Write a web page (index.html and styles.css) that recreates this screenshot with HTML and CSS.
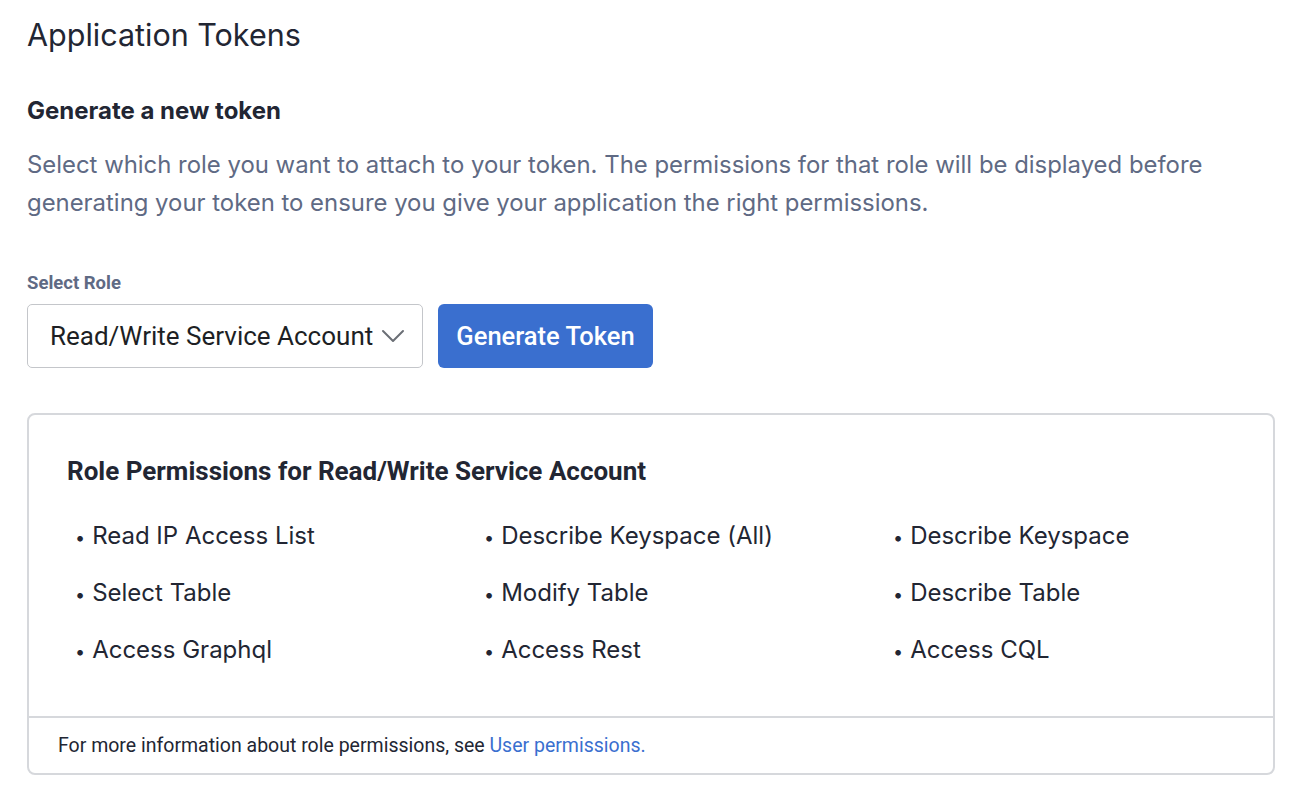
FILE: index.html
```html
<!DOCTYPE html>
<html lang="en">
<head>
<meta charset="utf-8">
<title>Application Tokens</title>
<link rel="stylesheet" href="styles.css">
</head>
<body>
<main class="page">
  <h1 class="page-title">Application Tokens</h1>
  <h2 class="section-title">Generate a new token</h2>
  <p class="desc">Select which role you want to attach to your token. The permissions for that role will be displayed before generating your token to ensure you give your application the right permissions.</p>

  <div class="field">
    <label class="field-label">Select Role</label>
    <div class="controls">
      <div class="select">
        <span class="select-value">Read/Write Service Account</span>
        <svg class="chevron" width="24" height="14" viewBox="0 0 24 14"><path d="M2 2 L12 12 L22 2" fill="none" stroke="#6b6f76" stroke-width="2" stroke-linecap="round" stroke-linejoin="round"/></svg>
      </div>
      <button class="btn-primary">Generate Token</button>
    </div>
  </div>

  <section class="card">
    <div class="card-body">
      <h3 class="card-title">Role Permissions for Read/Write Service Account</h3>
      <ul class="perm-grid">
        <li>Read IP Access List</li>
        <li>Describe Keyspace (All)</li>
        <li>Describe Keyspace</li>
        <li>Select Table</li>
        <li>Modify Table</li>
        <li>Describe Table</li>
        <li>Access Graphql</li>
        <li>Access Rest</li>
        <li>Access CQL</li>
      </ul>
    </div>
    <div class="card-footer">For more information about role permissions, see <a href="#" class="link">User permissions.</a></div>
  </section>
</main>
</body>
</html>
```

FILE: styles.css
```css
* { box-sizing: border-box; }
html, body { margin: 0; padding: 0; background: #ffffff; }
body { font-family: "Inter", "Roboto", sans-serif; color: #1f2433; }

.page { padding: 14px 33px 0 27px; }

.page-title {
  margin: 0;
  font-family: "Inter", sans-serif;
  font-weight: 400;
  font-size: 30.5px;
  line-height: 42px;
  color: #222633;
}

.section-title {
  margin: 39px 0 0;
  font-family: "Inter", sans-serif;
  font-weight: 700;
  font-size: 24px;
  line-height: 32px;
  color: #222633;
}

.desc {
  margin: 19px 0 0;
  font-family: "Inter", sans-serif;
  font-size: 23.9px;
  line-height: 38px;
  color: #5f6a84;
}

.field { margin-top: 50px; display: flex; flex-direction: column; }
.field-label {
  font-family: "Roboto", sans-serif;
  font-weight: 700;
  font-size: 18.5px;
  line-height: 22px;
  color: #5f6a84;
}
.controls { margin-top: 10px; display: flex; gap: 15px; align-items: stretch; }

.select {
  width: 396px;
  height: 64px;
  border: 1.5px solid #c4c6ca;
  border-radius: 5px;
  display: flex;
  align-items: center;
  justify-content: space-between;
  padding: 0 17px 0 22px;
  font-family: "Roboto", sans-serif;
  font-size: 26px;
  color: #1d1f24;
}
.chevron { display: block; }

.btn-primary {
  width: 215px;
  height: 64px;
  border: 0;
  border-radius: 6px;
  background: #3a6fcf;
  color: #ffffff;
  font-family: "Roboto", sans-serif;
  font-weight: 500;
  font-size: 25.5px;
}

.card {
  margin-top: 45px;
  border: 2px solid #d6d8dc;
  border-radius: 8px;
  width: 1248px;
}
.card-body { padding: 39px 38px 47px; }
.card-title {
  margin: 0;
  font-family: "Roboto", sans-serif;
  font-weight: 700;
  font-size: 26px;
  line-height: 34px;
  color: #222633;
}
.perm-grid {
  list-style: none;
  margin: 30px 0 0;
  padding: 0 0 0 8px;
  display: grid;
  grid-template-columns: 409px 409px 1fr;
  row-gap: 20px;
}
.perm-grid li {
  font-family: "Inter", sans-serif;
  font-size: 24px;
  line-height: 35px;
  color: #222633;
  white-space: nowrap;
}
.perm-grid li::before { content: "\2022"; margin-right: 7px; font-size: 18px; }

.card-footer {
  border-top: 2px solid #d6d8dc;
  padding: 16px 29px 15px;
  font-family: "Roboto", sans-serif;
  font-size: 19.5px;
  line-height: 24px;
  color: #222633;
}
.link { color: #3a6fcf; text-decoration: none; }
```
